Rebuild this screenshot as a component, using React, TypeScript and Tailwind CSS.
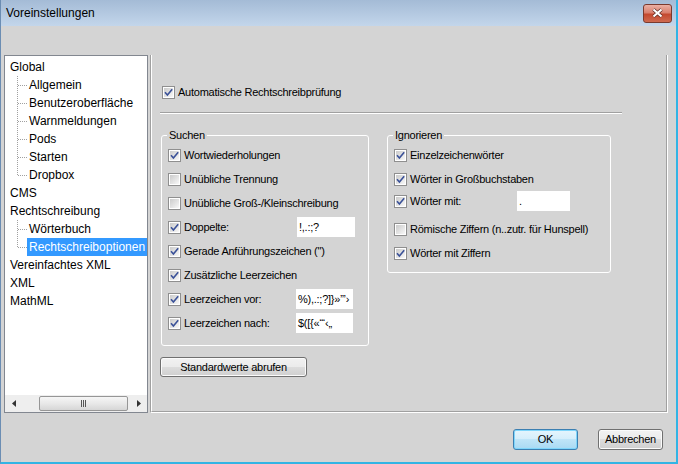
import React from "react";

function Box({ checked }: { checked?: boolean }) {
    return (
        <span className="flex h-[13px] w-[13px] shrink-0 border border-[#8f8f8f] bg-white p-px">
            <span className="flex h-full w-full items-center justify-center bg-linear-to-br from-[#cbcbcb] to-[#f8f8f8]">
                {checked && (
                    <svg width="9" height="9" viewBox="0 0 9 9" className="overflow-visible">
                        <path
                            d="M1 4.3 L3.4 7 L8.2 1.2"
                            fill="none"
                            stroke="#3a5198"
                            strokeWidth="1.6"
                        />
                    </svg>
                )}
            </span>
        </span>
    );
}

function Check({ label, checked }: { label: string; checked?: boolean }) {
    return (
        <div className="flex items-center gap-[3px] whitespace-nowrap">
            <Box checked={checked} />
            <span>{label}</span>
        </div>
    );
}

function Field({ value, className = "" }: { value: string; className?: string }) {
    return (
        <div
            className={`flex h-[20px] items-center overflow-hidden whitespace-nowrap bg-white px-[2px] ${className}`}
        >
            {value}
        </div>
    );
}

function Button({ label, primary, className = "" }: { label: string; primary?: boolean; className?: string }) {
    return (
        <button
            className={`flex items-center justify-center rounded-[3px] border ${
                primary
                    ? "border-[#3c7fb1] bg-[linear-gradient(#e5f5fd,#d4eefb_50%,#bfe5f8_50%,#a9daf3)] shadow-[inset_0_0_0_1px_#7fd6fb]"
                    : "border-[#707070] bg-[linear-gradient(#f2f2f2,#ebebeb_50%,#dddddd_50%,#cfcfcf)] shadow-[inset_0_0_0_1px_#fbfbfb]"
            } ${className}`}
        >
            {label}
        </button>
    );
}

function Branch({ last }: { last?: boolean }) {
    return (
        <svg width="19" height="18" className="shrink-0">
            <line
                x1="7.5"
                y1="0"
                x2="7.5"
                y2={last ? 9 : 18}
                stroke="#a0a0a0"
                strokeDasharray="1 1"
            />
            <line x1="8" y1="9.5" x2="17" y2="9.5" stroke="#a0a0a0" strokeDasharray="1 1" />
        </svg>
    );
}

type Node = { label: string; child?: boolean; last?: boolean; selected?: boolean };

const tree: Node[] = [
    { label: "Global" },
    { label: "Allgemein", child: true },
    { label: "Benutzeroberfläche", child: true },
    { label: "Warnmeldungen", child: true },
    { label: "Pods", child: true },
    { label: "Starten", child: true },
    { label: "Dropbox", child: true, last: true },
    { label: "CMS" },
    { label: "Rechtschreibung" },
    { label: "Wörterbuch", child: true },
    { label: "Rechtschreiboptionen", child: true, last: true, selected: true },
    { label: "Vereinfachtes XML" },
    { label: "XML" },
    { label: "MathML" },
];

function Tree() {
    return (
        <div className="flex w-[144px] flex-col border border-[#828790] bg-white text-[12px] text-black">
            <div className="flex-1 overflow-hidden pl-[5px] pt-[2px]">
                {tree.map((n) => (
                    <div key={n.label} className="flex h-[18px] items-center whitespace-nowrap">
                        {n.child && <Branch last={n.last} />}
                        <span
                            className={`flex h-full items-center ${
                                n.selected ? "-ml-[2px] bg-[#3399ff] px-[2px] text-white" : ""
                            }`}
                        >
                            {n.label}
                        </span>
                    </div>
                ))}
            </div>
            <div className="flex h-[17px] items-center bg-[#eeeeee]">
                <div className="flex h-full w-[17px] items-center justify-center">
                    <svg width="4" height="7" viewBox="0 0 4 7">
                        <path d="M4 0 L0 3.5 L4 7 Z" fill="#333" />
                    </svg>
                </div>
                <div className="ml-[17px] flex h-[15px] w-[89px] items-center justify-center gap-[1px] rounded-[2px] border border-[#969696] bg-[linear-gradient(#f6f6f6,#e8e8e8_50%,#d6d6d6)]">
                    <span className="h-[7px] w-px bg-[#555]" />
                    <span className="h-[7px] w-px bg-[#555]" />
                    <span className="h-[7px] w-px bg-[#555]" />
                </div>
                <div className="ml-auto flex h-full w-[17px] items-center justify-center">
                    <svg width="4" height="7" viewBox="0 0 4 7">
                        <path d="M0 0 L4 3.5 L0 7 Z" fill="#333" />
                    </svg>
                </div>
            </div>
        </div>
    );
}

function Group({ title, className = "", children }: { title: string; className?: string; children: React.ReactNode }) {
    return (
        <div className={`relative rounded-[3px] border border-white px-[6px] pt-[7px] ${className}`}>
            <span className="absolute -top-[7px] left-[5px] bg-[#d4d4d4] px-[2px] leading-[13px]">{title}</span>
            {children}
        </div>
    );
}

export default function App() {
    return (
        <div className="flex h-[464px] w-[678px] flex-col overflow-hidden border-b-2 border-l border-r-2 border-b-[#33b4e4] border-l-[#6b8db3] border-r-[#33b4e4] bg-[#d4d4d4] font-['Liberation_Sans',Arial,sans-serif] text-black">
            {/* title bar */}
            <div className="flex h-[26px] shrink-0 items-center justify-between bg-linear-to-b from-[#a4bbd6] to-[#c3d6eb] pl-[5px] pr-[4px]">
                <span className="text-[12px]">Voreinstellungen</span>
                <div className="flex h-[19px] w-[29px] items-center justify-center rounded-[3px] border border-[#7a3a2e] bg-[linear-gradient(#ebb0a4,#d9806e_45%,#c4492f_55%,#cf6a50)]">
                    <svg width="11" height="10" viewBox="0 0 11 10">
                        <path d="M1.5 1.5 L9.5 8.5 M9.5 1.5 L1.5 8.5" stroke="#5b2a22" strokeWidth="3.6" />
                        <path d="M1.5 1.5 L9.5 8.5 M9.5 1.5 L1.5 8.5" stroke="#fff" strokeWidth="2.2" />
                    </svg>
                </div>
            </div>

            <div className="flex flex-1 flex-col pl-[3px] pr-[8px] pt-[29px]">
                <div className="flex h-[358px] gap-[2px]">
                    <Tree />

                    <div className="w-[518px] border-b border-l border-r border-b-white border-l-[#a0a0a0] border-r-white">
                        <div className="flex h-full flex-col border-b border-l border-r border-b-[#a0a0a0] border-l-white border-r-[#a0a0a0] text-[11px] tracking-[-0.25px]">
                            <div className="ml-[10px] mt-[29px] flex h-[16px] items-center">
                                <Check label="Automatische Rechtschreibprüfung" checked />
                            </div>
                            <div className="ml-[8px] mt-[12px] w-[462px] border-b border-t border-b-white border-t-[#a0a0a0]" />

                            <div className="mt-[21px] flex items-start">
                                <Group title="Suchen" className="ml-[9px] w-[208px] pb-[10px]">
                                    <div className="flex h-[24px] items-center">
                                        <Check label="Wortwiederholungen" checked />
                                    </div>
                                    <div className="flex h-[24px] items-center">
                                        <Check label="Unübliche Trennung" />
                                    </div>
                                    <div className="flex h-[24px] items-center">
                                        <Check label="Unübliche Groß-/Kleinschreibung" />
                                    </div>
                                    <div className="flex h-[24px] items-center">
                                        <div className="w-[129px]">
                                            <Check label="Doppelte:" checked />
                                        </div>
                                        <Field value="!,.:;?" className="w-[58px]" />
                                    </div>
                                    <div className="flex h-[24px] items-center">
                                        <Check label="Gerade Anführungszeichen (&quot;)" checked />
                                    </div>
                                    <div className="flex h-[24px] items-center">
                                        <Check label="Zusätzliche Leerzeichen" checked />
                                    </div>
                                    <div className="flex h-[24px] items-center">
                                        <div className="w-[128px]">
                                            <Check label="Leerzeichen vor:" checked />
                                        </div>
                                        <Field value="%),.:;?]}»”’›" className="w-[57px]" />
                                    </div>
                                    <div className="flex h-[24px] items-center">
                                        <div className="w-[128px]">
                                            <Check label="Leerzeichen nach:" checked />
                                        </div>
                                        <Field value="$([{«“‘‹„" className="w-[57px]" />
                                    </div>
                                </Group>

                                <Group title="Ignorieren" className="ml-[18px] w-[224px] pb-[7px]">
                                    <div className="flex h-[24px] items-center">
                                        <Check label="Einzelzeichenwörter" checked />
                                    </div>
                                    <div className="flex h-[24px] items-center">
                                        <Check label="Wörter in Großbuchstaben" checked />
                                    </div>
                                    <div className="flex h-[20px] items-center">
                                        <div className="w-[123px]">
                                            <Check label="Wörter mit:" checked />
                                        </div>
                                        <Field value="." className="w-[53px]" />
                                    </div>
                                    <div className="mt-[6px] flex h-[24px] items-center">
                                        <Check label="Römische Ziffern (n..zutr. für Hunspell)" />
                                    </div>
                                    <div className="flex h-[24px] items-center">
                                        <Check label="Wörter mit Ziffern" checked />
                                    </div>
                                </Group>
                            </div>

                            <Button label="Standardwerte abrufen" className="ml-[8px] mt-[11px] h-[20px] w-[147px]" />
                        </div>
                    </div>
                </div>

                <div className="mr-[5px] mt-[16px] flex justify-end gap-[20px] text-[11px] tracking-[-0.25px]">
                    <Button label="OK" primary className="h-[21px] w-[65px]" />
                    <Button label="Abbrechen" className="h-[21px] w-[65px]" />
                </div>
            </div>
        </div>
    );
}
